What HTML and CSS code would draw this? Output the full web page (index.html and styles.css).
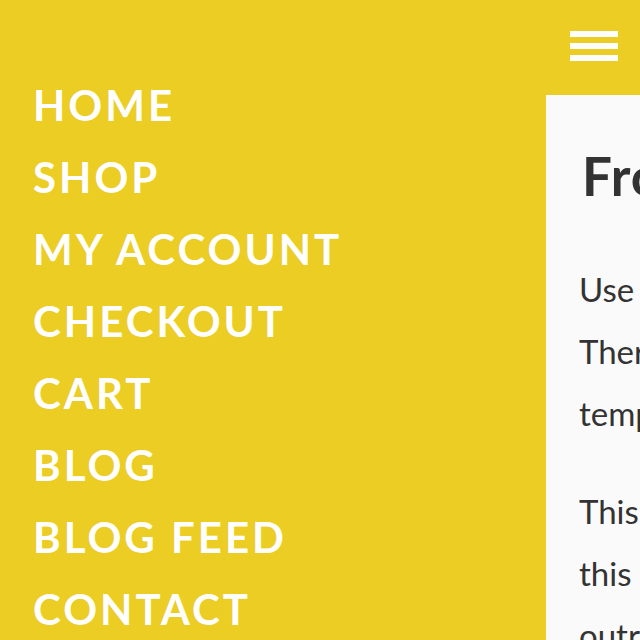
FILE: index.html
```html
<!DOCTYPE html>
<html lang="en">
<head>
<meta charset="utf-8">
<title>Frontpage</title>
<link rel="stylesheet" href="styles.css">
</head>
<body>
<div class="screen">
  <nav class="menu">
    <ul class="menu-list">
      <li><a href="#">Home</a></li>
      <li><a href="#">Shop</a></li>
      <li><a href="#">My Account</a></li>
      <li><a href="#">Checkout</a></li>
      <li><a href="#">Cart</a></li>
      <li><a href="#">Blog</a></li>
      <li><a href="#">Blog Feed</a></li>
      <li><a href="#">Contact</a></li>
    </ul>
  </nav>
  <div class="page">
    <header class="topbar">
      <button class="burger" aria-label="Menu"><span></span><span></span><span></span></button>
    </header>
    <main class="content">
      <h1 class="title">Frontpage</h1>
      <p>Use this page to welcome visitors.<br>There are many ways to adjust this<br>tem­plate to suit your shop.</p>
      <p>This is an example paragraph, and<br>this text can be replaced to make it<br>outright your own.</p>
    </main>
  </div>
</div>
</body>
</html>
```
FILE: styles.css
```css
html, body {
  margin: 0;
  padding: 0;
  height: 100%;
}
body {
  background: #ebcd23;
  overflow: hidden;
  font-family: "Lato", "Noto Sans", sans-serif;
}
.screen {
  display: flex;
  width: 640px;
  height: 640px;
  overflow: hidden;
}
.menu {
  flex: 0 0 546px;
  padding-top: 69px;
  box-sizing: border-box;
}
.menu-list {
  list-style: none;
  margin: 0;
  padding: 0 0 0 33px;
}
.menu-list li {
  font-size: 42px;
  line-height: 72px;
  font-weight: 700;
  letter-spacing: 3px;
  text-transform: uppercase;
  white-space: nowrap;
}
.menu-list a {
  color: #ffffff;
  text-decoration: none;
}
.page {
  flex: 0 0 640px;
  display: flex;
  flex-direction: column;
}
.topbar {
  flex: 0 0 95px;
  padding: 31px 0 0 24px;
  box-sizing: border-box;
}
.burger {
  display: flex;
  flex-direction: column;
  gap: 6px;
  width: 48px;
  padding: 0;
  border: 0;
  background: none;
}
.burger span {
  display: block;
  height: 6px;
  background: #ffffff;
}
.content {
  flex: 1 1 auto;
  background: #fafafa;
  padding: 49px 0 0 33px;
  color: #333333;
}
.title {
  margin: 0 0 50px;
  padding-left: 3px;
  font-size: 53px;
  line-height: 1.2;
  font-weight: 700;
  letter-spacing: 1px;
  white-space: nowrap;
}
.content p {
  margin: 0 0 36px;
  font-size: 33px;
  line-height: 62px;
  white-space: nowrap;
}
```
